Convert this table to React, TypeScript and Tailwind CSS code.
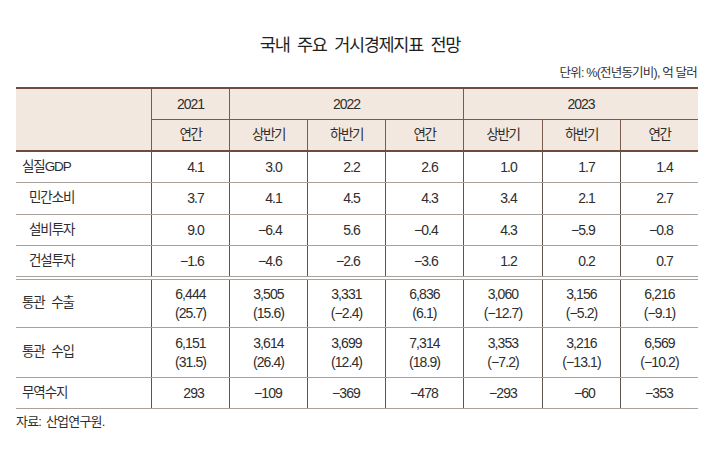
import React from "react";

const FONT = { fontFamily: '"Liberation Sans", "Noto Sans CJK KR", sans-serif' };

type Row = { label: string; indent?: boolean; values: string[]; sub?: string[]; h: string; double?: boolean };

const rows: Row[] = [
  { label: "실질GDP", values: ["4.1", "3.0", "2.2", "2.6", "1.0", "1.7", "1.4"], h: "h-[31px]" },
  { label: "민간소비", indent: true, values: ["3.7", "4.1", "4.5", "4.3", "3.4", "2.1", "2.7"], h: "h-[32px]" },
  { label: "설비투자", indent: true, values: ["9.0", "−6.4", "5.6", "−0.4", "4.3", "−5.9", "−0.8"], h: "h-[31px]" },
  { label: "건설투자", indent: true, values: ["−1.6", "−4.6", "−2.6", "−3.6", "1.2", "0.2", "0.7"], h: "h-[34px]", double: true },
  {
    label: "통관 수출",
    values: ["6,444", "3,505", "3,331", "6,836", "3,060", "3,156", "6,216"],
    sub: ["(25.7)", "(15.6)", "(−2.4)", "(6.1)", "(−12.7)", "(−5.2)", "(−9.1)"],
    h: "h-[48px]",
  },
  {
    label: "통관 수입",
    values: ["6,151", "3,614", "3,699", "7,314", "3,353", "3,216", "6,569"],
    sub: ["(31.5)", "(26.4)", "(12.4)", "(18.9)", "(−7.2)", "(−13.1)", "(−10.2)"],
    h: "h-[50px]",
  },
  { label: "무역수지", values: ["293", "−109", "−369", "−478", "−293", "−60", "−353"], h: "h-[31px]" },
];

const COLS = "grid-cols-[135px_78px_78px_78px_78px_79px_78px_78px]";

export default function App() {
  return (
    <div className="w-[720px] h-[456px] bg-white text-[#2e2e2e] overflow-hidden" style={FONT}>
      <div className="pt-[33px] text-center text-[17.5px] leading-[24px] tracking-[-1.3px] [word-spacing:4px] text-[#1f1f1f]">
        국내 주요 거시경제지표 전망
      </div>
      <div className="mt-[8px] pr-[23px] text-right text-[12.5px] leading-[16px] tracking-[-0.8px] text-[#333]">
        단위: %(전년동기비), 억 달러
      </div>
      <div className="ml-[16px] mt-[6px] w-[682px]">
        {/* header */}
        <div className={`grid ${COLS} grid-rows-[31px_30px] bg-[#f3e8df] border-t-2 border-b-2 border-[#6e4c3d] text-[14px] tracking-[-1px]`}>
          <div className="row-span-2" />
          <div className="border-l border-b border-[#7a5a4b] flex items-center justify-center">2021</div>
          <div className="col-span-3 border-l border-b border-[#7a5a4b] flex items-center justify-center">2022</div>
          <div className="col-span-3 border-l border-b border-[#7a5a4b] flex items-center justify-center">2023</div>
          {["연간", "상반기", "하반기", "연간", "상반기", "하반기", "연간"].map((t, i) => (
            <div key={i} className="border-l border-[#7a5a4b] flex items-center justify-center text-[13.5px] tracking-[-1.5px]">
              {t}
            </div>
          ))}
        </div>
        {/* body */}
        {rows.map((r, ri) => (
          <div
            key={ri}
            className={`grid ${COLS} ${r.h} ${r.double ? "border-b-4 border-double" : "border-b"} border-[#a8a19c] text-[14px]`}
          >
            <div className={`flex items-center ${r.indent ? "pl-[13px]" : "pl-[6px]"} tracking-[-1.1px] [word-spacing:4px] text-[13.5px] whitespace-pre`}>
              {r.label}
            </div>
            {r.values.map((v, vi) =>
              r.sub ? (
                <div
                  key={vi}
                  className="border-l border-[#5f5550] flex flex-col items-center justify-center leading-[19px] tracking-[-0.9px]"
                >
                  <span>{v}</span>
                  <span>{r.sub![vi]}</span>
                </div>
              ) : (
                <div
                  key={vi}
                  className="border-l border-[#5f5550] flex items-center justify-end pr-[25px] tracking-[-0.9px]"
                >
                  {v}
                </div>
              )
            )}
          </div>
        ))}
      </div>
      <div className="ml-[16px] mt-[5px] text-[13px] leading-[16px] tracking-[-0.8px] [word-spacing:2px]">자료: 산업연구원.</div>
    </div>
  );
}
